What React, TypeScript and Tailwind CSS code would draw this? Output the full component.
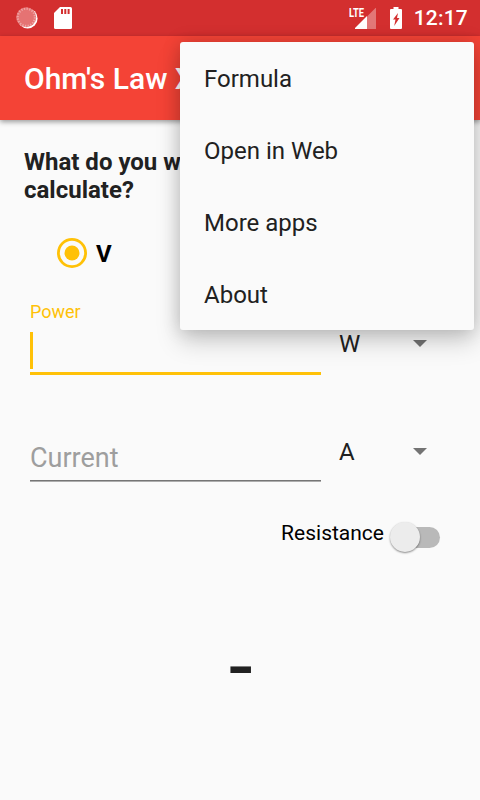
import React from "react";

const MENU_ITEMS = ["Formula", "Open in Web", "More apps", "About"];

function SpinnerIcon() {
  return (
    <svg width="22" height="22" viewBox="0 0 22 22">
      <circle cx="11.6" cy="11.4" r="10" fill="#fff" />
      <circle cx="10.2" cy="10.2" r="10" fill="#e57373" />
      <circle cx="10.3" cy="10.3" r="8.6" fill="none" stroke="#efa5a5" strokeWidth="2.2" strokeDasharray="1.3 1.4" />
    </svg>
  );
}

function SdCardIcon() {
  return (
    <svg width="18" height="22" viewBox="0 0 18 22">
      <path d="M6 0H16.5a1.5 1.5 0 0 1 1.5 1.5V20.5a1.5 1.5 0 0 1-1.5 1.5H1.5a1.5 1.5 0 0 1-1.5-1.5V6Z" fill="#fff" />
      <path d="M7 2h2v5H7zM10.3 2h2v5h-2zM13.6 2h2v5h-2z" fill="#d32f2f" />
    </svg>
  );
}

function SignalIcon() {
  return (
    <div className="relative h-[22px] w-[28px]">
      <span className="absolute left-0 top-px origin-left scale-x-[0.72] text-[13px] font-bold leading-[10px]">LTE</span>
      <svg className="absolute left-[6px] top-0" width="22" height="22" viewBox="0 0 22 22">
        <path d="M12 9.5 20.5 1H21V22H12Z" fill="#fff" fillOpacity=".35" />
        <path d="M0 22V21L12 9V22Z" fill="#fff" />
      </svg>
    </div>
  );
}

function BatteryIcon() {
  return (
    <svg width="12" height="22" viewBox="0 0 12 22">
      <path d="M3.5 0h5v2H11a1 1 0 0 1 1 1V21a1 1 0 0 1-1 1H1a1 1 0 0 1-1-1V3a1 1 0 0 1 1-1h2.5Z" fill="#fff" />
      <path d="M8 6 3 12.5h2.5L4.2 19 9.5 11H7Z" fill="#d32f2f" />
    </svg>
  );
}

function StatusBar() {
  return (
    <div className="flex h-9 items-center bg-[#d32f2f] text-white">
      <div className="ml-4 flex w-[38px]"><SpinnerIcon /></div>
      <SdCardIcon />
      <div className="ml-auto mr-3 flex items-center">
        <SignalIcon />
        <div className="ml-[13px] mr-3"><BatteryIcon /></div>
        <span className="text-[21px] font-medium leading-9 tracking-[0.2px]">12:17</span>
      </div>
    </div>
  );
}

function UnitSelect({ unit }: { unit: string }) {
  return (
    <div className="ml-[18px] flex h-7 items-center text-[24px] leading-7 text-[#212121]">
      <span className="w-[74px]">{unit}</span>
      <svg className="mb-[2px]" width="14" height="7" viewBox="0 0 14 7"><path d="M0 0h14L7 7Z" fill="#737373" /></svg>
    </div>
  );
}

function OverflowMenu() {
  return (
    <div className="absolute left-[180px] top-[42px] w-[294px] rounded-[3px] bg-[#fafafa] shadow-[0_12px_24px_rgba(0,0,0,0.18),0_0_18px_rgba(0,0,0,0.17)]">
      {MENU_ITEMS.map((item) => (
        <div key={item} className="flex h-[72px] items-center pl-6 pt-[2px] text-[24px] text-[#212121]">{item}</div>
      ))}
    </div>
  );
}

export default function App() {
  return (
    <div className="relative h-[800px] w-[480px] overflow-hidden bg-[#fafafa] font-['Roboto',sans-serif]">
      <StatusBar />
      <div className="flex h-[84px] items-center bg-[#f44336] pl-6 text-[30px] font-medium text-white shadow-[0_2px_5px_rgba(0,0,0,0.38)]">
        Ohm's Law X
      </div>
      <div className="px-6 pt-7">
        <div className="text-[24px] font-bold leading-7 text-[#212121]">
          <div>What do you want to</div>
          <div>calculate?</div>
        </div>
        <div className="mt-[33px] flex h-[32px] items-center pl-[33px] text-[24px] font-bold text-black">
          <svg width="30" height="30" viewBox="0 0 30 30">
            <circle cx="15" cy="15" r="13.6" fill="none" stroke="#ffc107" strokeWidth="2.8" />
            <circle cx="15" cy="15" r="7.5" fill="#ffc107" />
          </svg>
          <span className="ml-[9px] pt-[2px]">V</span>
        </div>
      </div>
      <div className="mt-8 flex pl-[30px]">
        <div className="h-[74px] w-[291px] border-b-[3px] border-[#ffc107]">
          <div className="h-[31px] text-[18px] leading-[21px] text-[#ffc107]">Power</div>
          <div className="h-[37px] w-[3px] bg-[#ffc107]" />
        </div>
        <div className="pt-[29px]"><UnitSelect unit="W" /></div>
      </div>
      <div className="mt-[63px] flex pl-[30px]">
        <div className="h-[43px] w-[291px] border-b border-[#757575] pt-[4px] text-[27px] leading-8 text-[#9e9e9e] shadow-[0_1px_0_#adadad]">Current</div>
        <UnitSelect unit="A" />
      </div>
      <div className="mt-[41px] flex h-[32px] justify-end pr-10 text-[21px] text-black">
        <span className="leading-[23px]">Resistance</span>
        <div className="ml-[5px] flex h-[30px] w-[51px] items-center pl-px">
          <div className="z-10 h-[30px] w-[30px] shrink-0 rounded-full bg-[#ececec] shadow-[0_1px_2px_rgba(0,0,0,0.45)]" />
          <div className="-ml-[19px] h-[21px] w-[39px] shrink-0 rounded-full bg-[#b9b9b9]" />
        </div>
      </div>
      <div className="mt-[79px] flex justify-center pl-[2px] text-[60px] font-bold leading-[70px] text-[#212121]">
        <span className="inline-block scale-x-[1.24]">-</span>
      </div>
      <OverflowMenu />
    </div>
  );
}
